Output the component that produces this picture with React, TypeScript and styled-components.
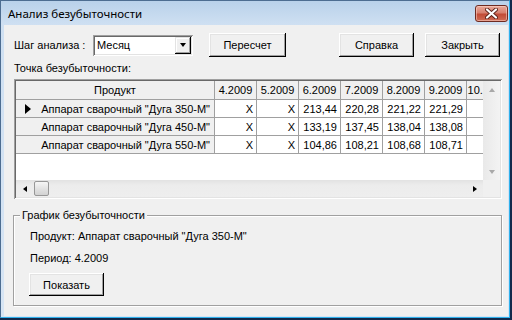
import React from "react";
import styled, { createGlobalStyle } from "styled-components";

const GlobalStyle = createGlobalStyle`
  html, body { margin: 0; padding: 0; }
  body {
    background: #13294b;
    font-family: "Liberation Sans", Arial, sans-serif;
    font-size: 11px;
    color: #000;
  }
  * { box-sizing: border-box; }
`;

const Desktop = styled.div`
  width: 512px;
  height: 320px;
  overflow: hidden;
`;

const Window = styled.div`
  width: 510px;
  height: 318px;
  display: flex;
  flex-direction: column;
  padding: 0 1px 1px 3px;
  background: linear-gradient(to bottom, #b9d1ea 0px, #cfe0f2 24px, #d7e5f4 100%);
  border: 1px solid #4d6d91;
  border-right-color: #2fb1ec;
  border-bottom-color: #2fb1ec;
`;

const TitleBar = styled.div`
  height: 24px;
  display: flex;
  align-items: center;
  padding-left: 4px;
  font-family: "Noto Sans", "Open Sans", sans-serif;
  font-size: 11.5px;
  color: #000;
`;

const TitleText = styled.span`
  flex: 1;
`;

const CloseButton = styled.div`
  width: 33px;
  height: 17px;
  border: 1px solid #6e2b22;
  border-radius: 3px;
  background: linear-gradient(to bottom, #e9a99b 0%, #d7806f 45%, #c24b36 55%, #cf6c55 100%);
  display: flex;
  align-items: center;
  justify-content: center;
  box-shadow: inset 0 0 0 1px rgba(255, 220, 210, 0.5);
`;

const Client = styled.div`
  flex: 1;
  background: #f0f0f0;
  display: flex;
  flex-direction: column;
`;

const TopRow = styled.div`
  margin-top: 8px;
  height: 24px;
  display: flex;
  align-items: center;
  padding: 0 8px 0 10px;
`;

const FieldLabel = styled.span`
  width: 79px;
  white-space: nowrap;
`;

const Combo = styled.div`
  width: 100px;
  height: 21px;
  background: #fff;
  display: flex;
  align-items: center;
  padding-left: 4px;
  box-shadow: inset 1px 1px 0 #a0a0a0, inset -1px -1px 0 #fff, inset 2px 2px 0 #696969, inset -2px -2px 0 #e3e3e3;
`;

const ComboText = styled.span`
  flex: 1;
`;

const ComboArrow = styled.div`
  width: 16px;
  height: 17px;
  margin-right: 2px;
  background: #f0f0f0;
  display: flex;
  align-items: center;
  justify-content: center;
  box-shadow: inset -1px -1px 0 #000, inset 1px 1px 0 #e3e3e3, inset -2px -2px 0 #a0a0a0, inset 2px 2px 0 #fff;
`;

const DownTriangle = styled.div<{ $color?: string }>`
  width: 0;
  height: 0;
  border-left: 3.5px solid transparent;
  border-right: 3.5px solid transparent;
  border-top: 4px solid ${(p) => p.$color || "#000"};
`;

const UpTriangle = styled.div<{ $color?: string }>`
  width: 0;
  height: 0;
  border-left: 3.5px solid transparent;
  border-right: 3.5px solid transparent;
  border-bottom: 4px solid ${(p) => p.$color || "#000"};
`;

const LeftTriangle = styled.div<{ $color?: string }>`
  width: 0;
  height: 0;
  border-top: 3.5px solid transparent;
  border-bottom: 3.5px solid transparent;
  border-right: 4px solid ${(p) => p.$color || "#000"};
`;

const RightTriangle = styled.div<{ $color?: string }>`
  width: 0;
  height: 0;
  border-top: 3.5px solid transparent;
  border-bottom: 3.5px solid transparent;
  border-left: 4px solid ${(p) => p.$color || "#000"};
`;

const Button = styled.button<{ $w: number; $ml?: number; $h?: number }>`
  width: ${(p) => p.$w}px;
  height: ${(p) => p.$h || 24}px;
  margin-left: ${(p) => p.$ml || 0}px;
  padding: 0;
  border: none;
  background: #f0f0f0;
  font-family: "Liberation Sans", Arial, sans-serif;
  font-size: 11px;
  color: #000;
  box-shadow: inset -1px -1px 0 #000, inset 1px 1px 0 #fff, inset -2px -2px 0 #a0a0a0, inset 2px 2px 0 #e3e3e3;
`;

const Spacer = styled.div`
  flex: 1;
`;

const SectionLabel = styled.div`
  margin: 5px 0 0 10px;
  line-height: 13px;
`;

const GridFrame = styled.div`
  margin: 4px 0 0 10px;
  width: 488px;
  height: 120px;
  padding: 2px;
  box-shadow: inset 1px 1px 0 #a0a0a0, inset -1px -1px 0 #fff, inset 2px 2px 0 #696969, inset -2px -2px 0 #e3e3e3;
  display: grid;
  grid-template-columns: 1fr 17px;
  grid-template-rows: 1fr 17px;
`;

const TableArea = styled.div`
  background: #fff;
  overflow: hidden;
`;

const Row = styled.div<{ $h: number }>`
  display: flex;
  height: ${(p) => p.$h}px;
  width: max-content;
`;

const Cell = styled.div<{ $w: number; $kind: "head" | "fixed" | "data" }>`
  flex: none;
  width: ${(p) => p.$w}px;
  height: 100%;
  display: flex;
  align-items: center;
  border-right: 1px solid #a0a0a0;
  border-bottom: 1px solid #a0a0a0;
  background: ${(p) => (p.$kind === "data" ? "#fff" : "#f0f0f0")};
  justify-content: ${(p) => (p.$kind === "head" ? "center" : "flex-end")};
  padding-right: ${(p) => (p.$kind === "head" ? 0 : p.$kind === "fixed" ? 4 : 3)}px;
  white-space: nowrap;
  overflow: hidden;
`;

const RowPointer = styled.div`
  width: 0;
  height: 0;
  margin-left: 9px;
  margin-right: auto;
  border-top: 5px solid transparent;
  border-bottom: 5px solid transparent;
  border-left: 6px solid #000;
`;

const VScroll = styled.div`
  background: linear-gradient(to right, #e9e9e9, #f3f3f3);
  display: flex;
  flex-direction: column;
  justify-content: space-between;
`;

const HScroll = styled.div`
  background: linear-gradient(to bottom, #e2e2e2, #ececec 30%, #eeeeee);
  display: flex;
  align-items: center;
`;

const ArrowBox = styled.div`
  width: 17px;
  height: 17px;
  flex: none;
  display: flex;
  align-items: center;
  justify-content: center;
`;

const Thumb = styled.div`
  width: 15px;
  height: 15px;
  margin-left: 1px;
  border: 1px solid #979797;
  border-radius: 2px;
  background: linear-gradient(to bottom, #f6f6f6, #e3e3e3 50%, #d2d2d2);
`;

const Corner = styled.div`
  background: #f0f0f0;
`;

const GroupBox = styled.div`
  position: relative;
  margin: 16px 0 0 9px;
  width: 489px;
  height: 91px;
  border: 1px solid #a0a0a0;
  box-shadow: 1px 1px 0 #fff, inset 1px 1px 0 #fff;
  padding: 14px 0 0 15px;
  display: flex;
  flex-direction: column;
  align-items: flex-start;
`;

const GroupTitle = styled.span`
  position: absolute;
  top: -7px;
  left: 6px;
  padding: 0 2px;
  line-height: 13px;
  background: #f0f0f0;
`;

const InfoLine = styled.div<{ $mt?: number }>`
  line-height: 13px;
  margin: ${(p) => p.$mt || 0}px 0 0 1px;
`;

const months = ["4.2009", "5.2009", "6.2009", "7.2009", "8.2009", "9.2009", "10.2009"];

const rows = [
  { name: 'Аппарат сварочный "Дуга 350-M"', vals: ["X", "X", "213,44", "220,28", "221,22", "221,29", ""] },
  { name: 'Аппарат сварочный "Дуга 450-M"', vals: ["X", "X", "133,19", "137,45", "138,04", "138,08", ""] },
  { name: 'Аппарат сварочный "Дуга 550-M"', vals: ["X", "X", "104,86", "108,21", "108,68", "108,71", ""] },
];

export default function App() {
  return (
    <>
      <GlobalStyle />
      <Desktop>
        <Window>
          <TitleBar>
            <TitleText>Анализ безубыточности</TitleText>
            <CloseButton>
              <svg width="13" height="11" viewBox="0 0 13 11">
                <path d="M2 1.5 L11 9.5 M11 1.5 L2 9.5" stroke="#5b2118" strokeWidth="4" strokeLinecap="round" fill="none" />
                <path d="M2 1.5 L11 9.5 M11 1.5 L2 9.5" stroke="#fff" strokeWidth="2.2" strokeLinecap="round" fill="none" />
              </svg>
            </CloseButton>
          </TitleBar>
          <Client>
            <TopRow>
              <FieldLabel>Шаг анализа :</FieldLabel>
              <Combo>
                <ComboText>Месяц</ComboText>
                <ComboArrow>
                  <DownTriangle />
                </ComboArrow>
              </Combo>
              <Button $w={77} $ml={16}>Пересчет</Button>
              <Spacer />
              <Button $w={75}>Справка</Button>
              <Button $w={75} $ml={11}>Закрыть</Button>
            </TopRow>
            <SectionLabel>Точка безубыточности:</SectionLabel>
            <GridFrame>
              <TableArea>
                <Row $h={19}>
                  <Cell $w={199} $kind="head">Продукт</Cell>
                  {months.map((m) => (
                    <Cell key={m} $w={42} $kind="head">{m}</Cell>
                  ))}
                </Row>
                {rows.map((r, i) => (
                  <Row key={r.name} $h={18}>
                    <Cell $w={199} $kind="fixed">
                      {i === 0 && <RowPointer />}
                      {r.name}
                    </Cell>
                    {r.vals.map((v, j) => (
                      <Cell key={j} $w={42} $kind="data">{v}</Cell>
                    ))}
                  </Row>
                ))}
              </TableArea>
              <VScroll>
                <ArrowBox>
                  <UpTriangle $color="#a8a8a8" />
                </ArrowBox>
                <ArrowBox>
                  <DownTriangle $color="#a8a8a8" />
                </ArrowBox>
              </VScroll>
              <HScroll>
                <ArrowBox>
                  <LeftTriangle />
                </ArrowBox>
                <Thumb />
                <Spacer />
                <ArrowBox>
                  <RightTriangle />
                </ArrowBox>
              </HScroll>
              <Corner />
            </GridFrame>
            <GroupBox>
              <GroupTitle>График безубыточности</GroupTitle>
              <InfoLine>Продукт: Аппарат сварочный "Дуга 350-M"</InfoLine>
              <InfoLine $mt={9}>Период: 4.2009</InfoLine>
              <Button $w={75} $h={23} style={{ marginTop: 8 }}>Показать</Button>
            </GroupBox>
          </Client>
        </Window>
      </Desktop>
    </>
  );
}
